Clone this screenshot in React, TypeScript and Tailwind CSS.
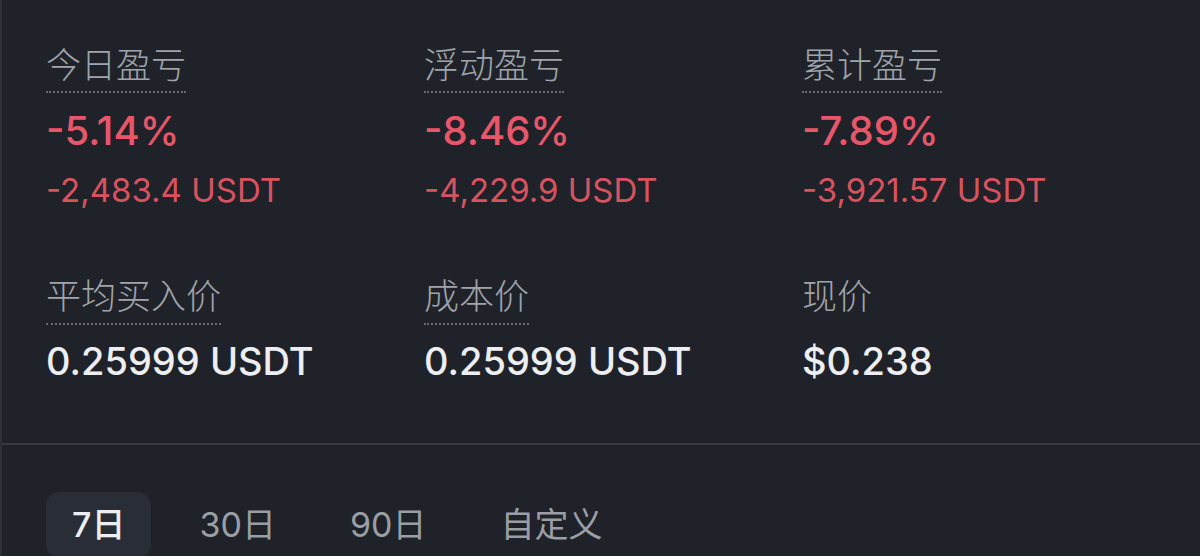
import React from 'react';

const font = { fontFamily: "Inter, 'Noto Sans CJK SC', sans-serif" };

const pnl = [
  { label: '今日盈亏', pct: '-5.14%', amt: '-2,483.4 USDT' },
  { label: '浮动盈亏', pct: '-8.46%', amt: '-4,229.9 USDT' },
  { label: '累计盈亏', pct: '-7.89%', amt: '-3,921.57 USDT' },
];

const prices = [
  { label: '平均买入价', value: '0.25999 USDT', dotted: true },
  { label: '成本价', value: '0.25999 USDT', dotted: true },
  { label: '现价', value: '$0.238', dotted: false },
];

const tabs = ['7日', '30日', '90日', '自定义'];

export default function App() {
  return (
    <div className="w-[1200px] h-[556px] overflow-hidden bg-[#1f2329] text-white" style={font}>
      <div className="border-l-2 border-[#2c3037] h-full flex flex-col">
        {/* 盈亏 */}
        <div className="shrink-0 grid grid-cols-[378px_378px_1fr] pl-[44px] pt-[45px]">
          {pnl.map((p) => (
            <div key={p.label} className="flex flex-col items-start">
              <div className="text-[35px] leading-[40px] text-[#a0a4ab] font-light pb-[6px] border-b-2 border-dotted border-[#666b73]">
                {p.label}
              </div>
              <div className="mt-[13px] text-[40px] leading-[50px] font-medium text-[#e8566a]">{p.pct}</div>
              <div className="mt-[14px] text-[33px] leading-[40px] text-[#d9525f]">{p.amt}</div>
            </div>
          ))}
        </div>

        {/* 价格 */}
        <div className="shrink-0 grid grid-cols-[378px_378px_1fr] pl-[44px] pt-[66px]">
          {prices.map((p) => (
            <div key={p.label} className="flex flex-col items-start">
              <div
                className={
                  p.dotted
                    ? 'text-[35px] leading-[40px] text-[#a0a4ab] font-light pb-[7px] border-b-2 border-dotted border-[#666b73]'
                    : 'text-[35px] leading-[40px] text-[#a0a4ab] font-light pb-[7px] border-b-2 border-transparent'
                }
              >
                {p.label}
              </div>
              <div className="mt-[11px] text-[38px] leading-[50px] font-medium text-[#eceef1]">{p.value}</div>
            </div>
          ))}
        </div>

        <div className="shrink-0 mt-[57px] h-[2px] bg-[#363a42]" />

        {/* 时间范围 */}
        <div className="shrink-0 flex items-center pl-[44px] pt-[47px] gap-[22px]">
          {tabs.map((t, i) => (
            <div
              key={t}
              className={
                i === 0
                  ? 'h-[66px] px-[26px] rounded-[14px] bg-[#292e36] text-[34px] leading-[66px] text-[#eceef1] font-medium'
                  : 'h-[66px] px-[26px] text-[34px] leading-[66px] text-[#9a9ea5]'
              }
            >
              {t}
            </div>
          ))}
        </div>
      </div>
    </div>
  );
}
